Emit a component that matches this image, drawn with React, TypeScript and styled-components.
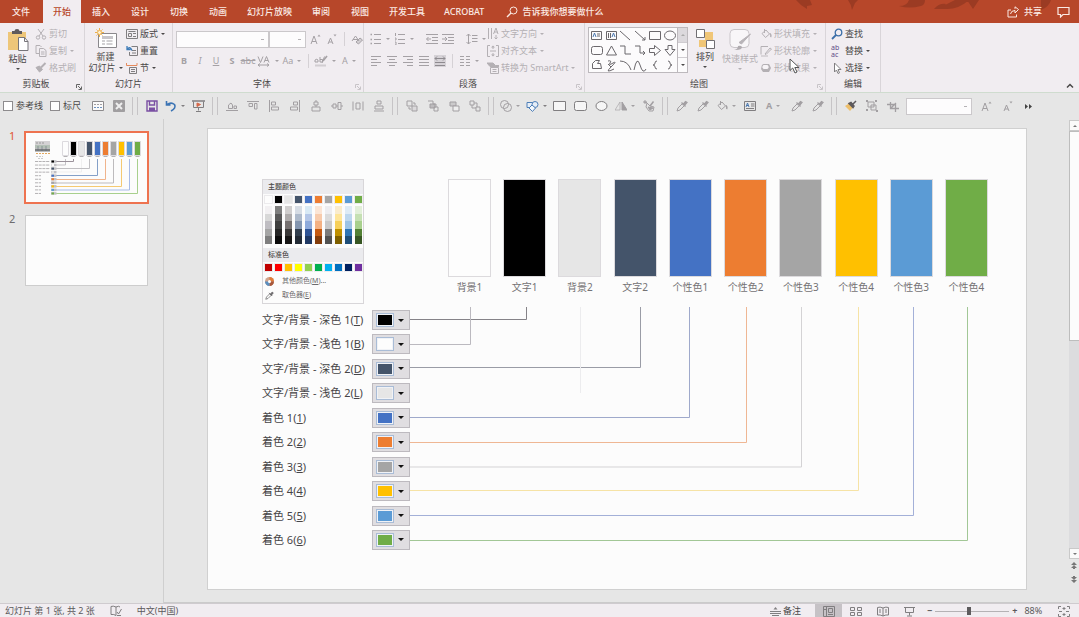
import React from "react";
import styled, { createGlobalStyle, css } from "styled-components";

const INK = "#4a4848";
const SOFT = "#807e80";
const MUTED = "#b4b0b4";
const BRAND = "#b7472a";
const RIBBON = "#f1edf1";
const CANVAS = "#e6e6e6";

const GlobalStyle = createGlobalStyle`
  * { box-sizing: border-box; }
  html, body, #root { height: 100%; }
  body {
    margin: 0;
    background: ${CANVAS};
    color: ${INK};
    font-family: "Noto Sans", "Noto Sans CJK SC", sans-serif;
    font-size: 9px;
    line-height: 12px;
  }
  button, input, select { font: inherit; color: inherit; }
  button { padding: 0; border: 0; background: none; white-space: nowrap; }
`;

/* ---------- icons ---------- */

type Art = { w: number; h: number; body: React.ReactNode };

const alignFrame = (body: React.ReactNode): Art => ({ w: 12, h: 12, body });

const dropper: Art = {
  w: 12, h: 12,
  body: (
    <>
      <path d="M1 11l1-3 4.5-4.5 2 2L4 10z" />
      <path d="M5.500 2.500l4 4M7 4.500l2.500-3 1.500 1L8.500 5.500z" fill="currentColor" strokeWidth="1.300" />
    </>
  ),
};

const bucket: Art = {
  w: 12, h: 12,
  body: (
    <>
      <path d="M2 5.500L6 2l3.500 4L5.500 9.500z" />
      <path d="M4.500 1v4" />
      <path d="M10 5.500q1.500 2 .5 3.500" strokeWidth="1.500" />
    </>
  ),
};

const growFont: Art = {
  w: 12, h: 12,
  body: <><path d="M1 11l3-8 3 8M2 8.500h4" /><path d="M7.500 3.500L9 1.500l1.500 2z" fill="currentColor" stroke="none" /></>,
};

const shrinkFont: Art = {
  w: 12, h: 12,
  body: <><path d="M2 11l2.500-6L7 11M3 9h3" /><path d="M7.500 1.500h3L9 3.500z" fill="currentColor" stroke="none" /></>,
};

const art: Record<string, Art> = {
  search: { w: 12, h: 12, body: <><circle cx="7.500" cy="4.500" r="3.500" /><path d="M5 7L1 11" strokeWidth="1.300" /></> },
  share: { w: 12, h: 12, body: <><path d="M4 4H1v7h8.500V8.500" /><path d="M3.500 8Q4 4.500 8 4.500V7l3.500-3.500L8 .8v2" /></> },
  comment: { w: 13, h: 12, body: <path d="M1 1.500h11v7H6L3.500 11V8.500H1z" strokeWidth="1.200" /> },
  paste: {
    w: 22, h: 24,
    body: (
      <>
        <path d="M1 4h18v18H1z" fill="#eec679" stroke="none" />
        <path d="M5 3h2.500a2.500 2 0 0 1 5 0H15v3H5z" fill="#5e5a5c" stroke="none" />
        <path d="M11.500 9.500h6l3.500 4v9h-9.500z" fill="#fff" stroke="#77757a" />
        <path d="M17.500 9.500v4H21" stroke="#77757a" />
      </>
    ),
  },
  cut: { w: 12, h: 12, body: <><path d="M3 1l5 7M9 1L4 8" /><circle cx="3" cy="9.500" r="1.700" /><circle cx="9" cy="9.500" r="1.700" /></> },
  copy: { w: 12, h: 12, body: <><path d="M4 8.500H1v-8h4l1.500 1.500" /><path d="M4.500 3.500h4l2.500 2v6H4.500zM6 7h3.500M6 9h3.500" /></> },
  painter: { w: 12, h: 12, body: <><path d="M1 5.500l3.500 4.500 3-2.500L4.500 4z" fill="currentColor" /><path d="M6 5.500L10.500 1" strokeWidth="2" /></> },
  newSlide: {
    w: 22, h: 22,
    body: (
      <>
        <path d="M3.500 5.500h18v14h-18z" fill="#fff" stroke="#8a888c" />
        <path d="M7 13h3M11.500 13h6M7 16h3M11.500 16h6" stroke="#a3a1a5" />
        <path d="M7 8h11v3H7z" fill="#c7c5c9" stroke="none" />
        <circle cx="4.500" cy="4.500" r="2" fill="#fff1cf" stroke="#edb04a" />
        <path d="M4.500 0v2M4.500 7v2M0 4.500h2M7 4.500h2M1.500 1.500l1.200 1.200M7.500 1.500L6.300 2.700M1.500 7.500l1.200-1.200M7.500 7.500L6.300 6.300" stroke="#edb04a" />
      </>
    ),
  },
  layout: { w: 12, h: 12, body: <><path d="M.5 1.500h11v9H.5zM2.500 3.500h7" /><path d="M2.500 5.500h3v3h-3zM7 5.500h3M7 8.500h3" /></> },
  reset: { w: 12, h: 12, body: <><path d="M5.500 1.500h6v9h-8V7M6 5.500h4M6 8h4" /><path d="M1 4.500q3-4 5 1M1 1v3.500h3.500" stroke="#3f7cb8" strokeWidth="1.300" /></> },
  section: { w: 12, h: 12, body: <><path d="M.5 1v2.500H11V1" stroke="#e58a5c" /><path d="M3.500 5.500h7v6h-7zM5 7.500h4M5 9.500h4" /></> },
  growFont,
  shrinkFont,
  clearFormat: { w: 12, h: 12, body: <><path d="M1 8l3.500-5L8 8M2 6.500h5" /><path d="M5 9l4-4 2.500 2-4 4z" fill="currentColor" fillOpacity=".4" /></> },
  spacing: { w: 14, h: 12, body: <><path d="M1 1.500l2.500 6 2.500-6M7 7.500L9.500 1.500l2.500 6M8 5.500h3M1 10h11M3 8.500L1 10l2 1.500M10 8.500l2 1.500-2 1.500" /></> },
  highlight: { w: 14, h: 12, body: <><path d="M1 7V5q2-1.500 3 0v2H2zM6 2v5h2.500V4.500H6M10.500 1.500L8 8" /><path d="M9 6l4-5" strokeWidth="1.600" /><path d="M1 10.500h11" strokeOpacity=".4" strokeWidth="2" /></> },
  bullets: { w: 12, h: 12, body: <><path d="M4 1.500h7M4 6.500h7M4 10.500h7" /><path d="M.5 1.500h1.500M.5 6.500h1.500M.5 10.500h1.500" strokeWidth="1.500" /></> },
  numbers: { w: 12, h: 12, body: <><path d="M4 1.500h7M4 6.500h7M4 10.500h7" /><path d="M1.500 0v3M1 5h1v2H1M1 9h1v3H1" /></> },
  outdent: { w: 12, h: 12, body: <path d="M0 1.500h12M6 4.500h6M6 7.500h6M0 10.500h12M5 6H.8M2.500 4L.5 6l2 2" /> },
  indent: { w: 12, h: 12, body: <path d="M0 1.500h12M6 4.500h6M6 7.500h6M0 10.500h12M0 6h4.500M3 4l2 2-2 2" /> },
  lineSpacing: { w: 12, h: 12, body: <path d="M2.500 1v10M.5 3l2-2 2 2M.5 9l2 2 2-2M6 2.500h5.500M6 5.500h5.500M6 8.500h5.500" /> },
  left: { w: 12, h: 12, body: <path d="M1 1.500h10M1 4.500h6M1 7.500h10M1 10.500h6" /> },
  center: { w: 12, h: 12, body: <path d="M1 1.500h10M3 4.500h6M1 7.500h10M3 10.500h6" /> },
  right: { w: 12, h: 12, body: <path d="M1 1.500h10M5 4.500h6M1 7.500h10M5 10.500h6" /> },
  justify: { w: 12, h: 12, body: <path d="M1 1.500h10M1 4.500h10M1 7.500h10M1 10.500h10" /> },
  distribute: { w: 12, h: 12, body: <><path d="M0 0h12v12H0z" fill="#d6d2d7" stroke="none" /><path d="M1 7.500h10M1 10.500h10M1 3.500h10M3 1.500l-2 2 2 2M9 1.500l2 2-2 2" stroke="#8e8a8f" /></> },
  columns: { w: 12, h: 12, body: <path d="M1 1.500h4M1 4.500h4M1 7.500h4M1 10.500h4M7 1.500h4M7 4.500h4M7 7.500h4M7 10.500h4" /> },
  textDir: { w: 12, h: 12, body: <path d="M1.500 0v11M4.500 0v11M6.500 6L9 0l2 6M7 4h3.500M9 7v4M7.500 9.500L9 11l1.500-1.500" /> },
  alignText: { w: 12, h: 12, body: <><path d="M3 .5H.5v11H3M9 .5h2.500v11H9M3 6h6M6 1v3M6 8v3" /><path d="M4 2.500L6 .5l2 2zM4 9.500l2 2 2-2z" fill="currentColor" stroke="none" /></> },
  smartArt: { w: 12, h: 12, body: <><path d="M0 1h6l2.500 2.500H12v1H3z" fill="currentColor" /><path d="M3.500 5.500h8v6h-8zM5.500 7.500h4M5.500 9.500h4" /></> },
  arrange: {
    w: 20, h: 22,
    body: (
      <>
        <path d="M10 4h8v8h-8zM4 12h7v7H4z" fill="#f0c677" stroke="none" />
        <path d="M1.500 1.500h8v8h-8zM11.500 12.500h8v8h-8z" fill="#fff" stroke="#716f73" />
      </>
    ),
  },
  quickStyle: {
    w: 24, h: 24,
    body: (
      <>
        <rect x="2" y="1.500" width="19" height="18" rx="4" fill="#f8f6f8" stroke="#c9c5c9" />
        <path d="M22.500 6l-9 10-2.500-1.500z" fill="#b8b4b8" stroke="#b8b4b8" />
        <path d="M6 22q4-.5 4-4 3-1 4 1 0 3.500-8 3z" fill="#b0acb0" stroke="none" />
      </>
    ),
  },
  bucket,
  outline: { w: 12, h: 12, body: <><path d="M8 1.500H1v8M5 9L10 3l1.500 1L6 9.500z" /><path d="M1 11h7" strokeOpacity=".4" strokeWidth="2" /></> },
  effect: { w: 12, h: 12, body: <><path d="M3 2h6l2 4-2 4H3L1 7z" fill="currentColor" stroke="none" /><rect x="2" y="2.500" width="7" height="5" rx="2" fill="#f7f4f7" /></> },
  find: { w: 12, h: 12, body: <><circle cx="7.500" cy="4.500" r="3.300" stroke="#3c6fa8" strokeWidth="1.300" /><path d="M5 7L1 11" stroke="#3c6fa8" strokeWidth="1.800" /></> },
  select: { w: 12, h: 12, body: <path d="M3.500 1v9l2-2 1.500 3.500 1.500-.7L7 7.500h3z" fill="#fff" /> },
  textBox: { w: 12, h: 12, body: <><path d="M.5 1.500h11v9H.5zM7 4h3.500M7 6h3.500M2 8.500h8" /><path d="M2 7l1.500-4L5 7M2.500 5.500h2" stroke="#4a78b0" /></> },
  ruler: { w: 12, h: 12, body: <><path d="M.5 1.500h11v9H.5z" fill="#fafafa" stroke="#8d8b8d" /><path d="M2 4.500h2M5 4.500h2M8 4.500h2" /><path d="M2 7.500h2M5 7.500h2M8 7.500h2" stroke="#6f93bf" /></> },
  closeBox: { w: 12, h: 12, body: <><path d="M.5.5h11v11H.5z" fill="#a09ea0" stroke="#a09ea0" /><path d="M3 3l6 6M9 3L3 9" stroke="#eee" strokeWidth="2" /></> },
  save: { w: 12, h: 12, body: <><path d="M1 1h10v10H1zM3.500 1v4h5V1" stroke="#7a4fa3" strokeWidth="1.400" /><path d="M3 7.500h6V11H3z" fill="#7a4fa3" stroke="none" /></> },
  undo: { w: 12, h: 12, body: <path d="M1.500 1v4h4M1.800 4.800Q6 1.500 9.500 4.500q2 3.500-3.500 6.500" stroke="#3c74b4" strokeWidth="1.600" /> },
  present: { w: 13, h: 12, body: <><path d="M0 1h13" strokeWidth="1.500" /><path d="M1.500 1.500v6h10v-6M6.500 7.500v3M4 11.500h5" /><path d="M5 3l3.500 1.500L5 6.500z" fill="#d5694b" stroke="#d5694b" /></> },
  alBottom: alignFrame(<path d="M0 10.500h12M2.500 8.500V5L5 3l1.500 2v3.500zM8 8.500V6h2.500v2.500z" />),
  alTop: alignFrame(<path d="M0 1.500h12M2 3.500h3.500v3H2zM7.500 3.500H10V9H7.500z" />),
  alLeft: alignFrame(<path d="M1.500 0v12M3.500 2h4v3h-4zM3.500 7h7v3h-7z" />),
  alRight: alignFrame(<path d="M10.500 0v12M8.500 2h-4v3h4zM8.500 7h-7v3h7z" />),
  alCenter: alignFrame(<path d="M6 0v2M4 2h4v3H4zM2 7h8v4H2zM6 5v2" />),
  alMiddle: alignFrame(<path d="M0 6h2M2 4h3v4H2zM7 2.500h3v7H7zM10 6h2M5 6h2" />),
  distH: alignFrame(<path d="M1 1.500v9M11 1.500v9M4 3h4v6H4z" />),
  distV: alignFrame(<path d="M1 11h10M4 1h4v3H4zM2 6h8v3H2z" />),
  front1: alignFrame(<><path d="M1 1h5v5H1zM3 7v2h2M7 3h2v2" /><path d="M6 6h5v5H6z" fill="#dcdadc" /></>),
  front2: alignFrame(<><path d="M1 1h5v3h3v3" /><path d="M3 4h5v4H3z" fill="currentColor" fillOpacity=".6" /><path d="M7 7h4v4H7z" /></>),
  back1: alignFrame(<><path d="M2 2h6v4H2z" fill="currentColor" fillOpacity=".4" /><path d="M5 6h6v5H5z" fill="#eee" /></>),
  back2: alignFrame(<path d="M1 1h4v4H1zM7 7h4v4H7zM5 3h3v4M3 5v3h4" />),
  merge: alignFrame(<><circle cx="4.500" cy="4.500" r="4" /><circle cx="7.500" cy="7.500" r="4" /></>),
  shapes: { w: 13, h: 12, body: <g stroke="#4e7fb8"><path d="M1 2.500h6v5H1z" fill="#e6eef7" /><circle cx="9" cy="4.500" r="3" fill="#e6eef7" /><path d="M3 8l3-3 3.500 3-3 3.500z" fill="#f4f8fc" /></g> },
  rect: { w: 13, h: 12, body: <path d="M.5 1.500h12v9H.5z" fill="#f6f6f6" /> },
  rrect: { w: 13, h: 12, body: <rect x=".5" y="1.500" width="12" height="9" rx="2" fill="#f6f6f6" /> },
  ellipse: { w: 13, h: 12, body: <ellipse cx="6.500" cy="6" rx="5.500" ry="4.500" fill="#f6f6f6" /> },
  flip: alignFrame(<><path d="M5 2v8H0z" strokeOpacity=".6" /><path d="M7 2v8h5z" fill="currentColor" /></>),
  editShape: alignFrame(<><path d="M1 2l3 .5M4 3l-1 4 3 4h4l1-4-4-1zM1 1h2v2H1z" /><path d="M5 7l2 3 3-2z" fill="currentColor" /><path d="M7 6l3.500-4.500" strokeWidth="1.500" /></>),
  dropper,
  brush: { w: 13, h: 12, body: <><path d="M1 6l5 5 3-3.500L5 3.500z" fill="#edbf6c" stroke="none" /><path d="M5 3.500L9 7.500l1-1.500-3-3.500zM8.500 4.500L12 1" fill="#5c595c" stroke="#5c595c" strokeWidth="1.500" /></> },
  group: alignFrame(<><path d="M2 2h6v5H2zM5 5h5v5H5z" /><path d="M0 0h2v2H0zM9 0h2v2H9zM0 9h2v2H0zM10 10h2v2h-2z" fill="currentColor" stroke="none" /></>),
  crop: alignFrame(<path d="M3.500 2v6.500H12M0 4.500h8.500V12M4 8l5-5" strokeWidth="1.300" />),
  spell: { w: 12, h: 12, body: <path d="M6 2v8.500M6 2Q3 .5 1 1.500v8q3-.5 5 1M6 2q3-1.500 4 0M7 7l1.500 2L11.500 4M7 10.500h4" /> },
  notes: { w: 11, h: 12, body: <><path d="M0 6.500h11M0 8.500h11M2 10.500h7" /><path d="M3.500 4.500l2-2.500 2 2.500z" fill="currentColor" stroke="none" /></> },
  normal: { w: 12, h: 11, body: <path d="M.5.5h11v10H.5zM3.500.5v10M5.500 2.500h4v4h-4zM5 8.500h5M.5 3.500h3" /> },
  sorter: { w: 12, h: 11, body: <path d="M.5 1.500h4v3h-4zM7.500 1.500h4v3h-4zM.5 6.500h4v3h-4zM7.500 6.500h4v3h-4z" /> },
  reading: { w: 12, h: 11, body: <path d="M6 2Q3 .5.5 1.500v7.500Q3 8.500 6 10q3-1.500 5.500-1V1.500Q9 .5 6 2zM6 2v8M2 4h2M2 6h2M8 4h2M8 6h2" /> },
  show: { w: 12, h: 11, body: <path d="M0 1.500h11M1.500 1.500v5h8v-5M5.500 6.500v3M3 10h5" /> },
  fit: { w: 12, h: 11, body: <path d="M.5 3V.5H3M9 .5h2.500V3M11.500 8v2.500H9M3 10.500H.5V8M6 1v3M6 7v3M1 5.500h3M8 5.500h3M4.500 2.500h3M4.500 8.500h3" /> },
};

const Svg = styled.svg<{ $tone?: string }>`
  display: block;
  flex: none;
  fill: none;
  stroke: currentColor;
  color: ${(p) => p.$tone || "inherit"};
`;

const Icon = ({ name, tone }: { name: string; tone?: string }) => {
  const a = art[name];
  return (
    <Svg $tone={tone} width={a.w} height={a.h} viewBox={`0 0 ${a.w} ${a.h}`} aria-hidden>
      {a.body}
    </Svg>
  );
};

const Caret = styled.i`
  flex: none;
  width: 4px;
  border: 2px solid transparent;
  border-top-color: currentColor;
  border-bottom-width: 0;
`;

/* ---------- shell ---------- */

const Window = styled.div`
  min-height: 100%;
  display: flex;
  flex-direction: column;
`;

const TabBar = styled.header`
  position: relative;
  height: 23px;
  display: flex;
  background: ${BRAND};
  color: #fbeae4;
  font-weight: 500;
`;

const Leaves = styled.svg`
  position: absolute;
  top: 0;
  right: 0;
  fill: #9b3b23;
`;

const Tab = styled.button<{ $active?: boolean }>`
  min-width: 38px;
  margin-right: 1px;
  padding: 0 9px;
  ${(p) => p.$active && css`background: ${RIBBON}; color: ${BRAND};`}
  &:first-of-type { min-width: 42px; }
`;

const TellMe = styled.label`
  display: flex;
  align-items: center;
  gap: 4px;
  margin-left: 12px;
  flex: 1;
  input {
    width: 100px;
    padding: 0;
    border: 0;
    background: none;
    &::placeholder { color: #fbeae4; opacity: 1; }
  }
`;

const TabActions = styled.div`
  position: relative;
  display: flex;
  gap: 15px;
  padding-right: 9px;
  button { display: flex; align-items: center; gap: 5px; }
`;

const Ribbon = styled.section`
  height: 70px;
  display: flex;
  background: ${RIBBON};
  border-bottom: 1px solid #cfdccf;
`;

const Group = styled.section<{ $w: number }>`
  width: ${(p) => p.$w}px;
  flex: none;
  display: flex;
  flex-direction: column;
  padding-top: 2px;
  border-right: 1px solid #d9d5d9;
`;

const GroupBody = styled.div`
  height: 53px;
  display: flex;
`;

const GroupFoot = styled.footer<{ $off?: boolean; $plain?: boolean }>`
  position: relative;
  text-align: center;
  padding-right: ${(p) => (p.$plain ? 0 : 12)}px;
  svg {
    position: absolute;
    right: 2px;
    bottom: 0;
    color: ${(p) => (p.$off ? "#c8c4c8" : "#666")};
  }
`;

const Foot = ({ label, off, plain }: { label: string; off?: boolean; plain?: boolean }) => (
  <GroupFoot $off={off} $plain={plain}>
    {label}
    {!plain && (
      <Svg width="6" height="6" viewBox="0 0 6 6" aria-hidden>
        <path d="M.5 4V.5H4M2 2l3 3M5.500 2.500v3h-3" />
      </Svg>
    )}
  </GroupFoot>
);

const BigButton = styled.button<{ $w: number; $off?: boolean }>`
  width: ${(p) => p.$w}px;
  flex: none;
  display: flex;
  flex-direction: column;
  align-items: center;
  color: ${(p) => (p.$off ? MUTED : INK)};
  line-height: 11px;
  > svg { margin: 3px 0 1px; }
  > i { margin-top: 4px; }
  span { display: flex; align-items: center; gap: 3px; }
`;

const Stack = styled.div<{ $pad?: number }>`
  display: flex;
  flex-direction: column;
  align-items: flex-start;
  padding-left: ${(p) => p.$pad || 0}px;
`;

const SmallButton = styled.button<{ $off?: boolean }>`
  height: 17px;
  display: flex;
  align-items: center;
  gap: 2px;
  color: ${(p) => (p.$off ? MUTED : INK)};
  > i { margin-left: 1px; }
`;

const FontPane = styled.div`
  flex: 1;
  padding: 3px 3px 0;
`;

const ToolRow = styled.div`
  height: 22px;
  display: flex;
  align-items: center;
  color: #a5a1a5;
`;

const Tool = styled.button<{ $menu?: boolean }>`
  width: ${(p) => (p.$menu ? 24 : 16)}px;
  height: 16px;
  flex: none;
  display: flex;
  align-items: center;
  justify-content: center;
  gap: 4px;
`;

const Bar = styled.i`
  width: 1px;
  height: 14px;
  margin: 0 4px;
  background: #d5d1d5;
`;

const FontCombos = styled.div`
  display: flex;
  margin-right: 2px;
`;

const Combo = styled.select<{ $w: number }>`
  width: ${(p) => p.$w}px;
  height: 17px;
  flex: none;
  appearance: none;
  border: 1px solid #cbc8cb;
  border-radius: 0;
  background: #fdfcfd linear-gradient(#b5b2b5, #b5b2b5) no-repeat right 4px center / 3px 1px;
`;

const Gallery = styled.div`
  display: flex;
  margin: 2px 2px 0 3px;
  height: 46px;
  border: 1px solid #bdb9bd;
  background: #fcfbfc;
`;

const ShapeGrid = styled.svg`
  fill: none;
  stroke: #6b686c;
`;

const GalleryScroll = styled.div`
  width: 10px;
  display: flex;
  flex-direction: column;
  border-left: 1px solid #bdb9bd;
  button {
    flex: 1;
    display: flex;
    align-items: center;
    justify-content: center;
    border-bottom: 1px solid #cfccd0;
  }
  button:first-child { background: #dcd9dd; color: #aaa; }
  button:last-child { border-bottom: 0; }
`;

const Collapse = styled.button`
  margin-left: auto;
  padding-right: 5px;
  align-self: flex-end;
  height: 12px;
`;

const Swap = styled.span`
  width: 12px;
  flex: none;
  font-size: 7px;
  line-height: 7px;
  text-align: left;
  white-space: pre-line;
  color: #5c4a86;
`;

const Pointer = styled.svg`
  position: absolute;
  left: 789px;
  top: 58px;
`;

/* ---------- quick access ---------- */

const QuickBar = styled.nav`
  height: 26px;
  flex: none;
  display: flex;
  align-items: center;
  padding-left: 3px;
  color: #a29fa2;
  overflow: hidden;
`;

const Check = styled.label<{ $w: number }>`
  width: ${(p) => p.$w}px;
  flex: none;
  display: flex;
  align-items: center;
  gap: 3px;
  color: ${INK};
  input {
    appearance: none;
    width: 10px;
    height: 10px;
    margin: 0;
    border: 1px solid #8d8b8d;
    background: #fff;
  }
`;

const Cell = styled.button<{ $menu?: boolean; $dark?: boolean }>`
  width: ${(p) => (p.$menu ? 26 : 21)}px;
  height: 20px;
  flex: none;
  display: flex;
  align-items: center;
  justify-content: center;
  gap: 4px;
  color: ${(p) => (p.$dark ? SOFT : "inherit")};
`;

const Divide = styled.i`
  width: 6px;
  height: 18px;
  flex: none;
  margin: 0 3px;
  border: solid #c6c4c6;
  border-width: 0 1px;
`;

const QuickCombo = styled(Combo)`
  margin: 0 4px 0 3px;
`;

/* ---------- work area ---------- */

const Work = styled.div`
  flex: 1;
  display: flex;
`;

const Thumbs = styled.aside`
  width: 164px;
  flex: none;
  padding: 12px 0 0 9px;
  border-right: 1px solid #cfcfcf;
  display: flex;
  flex-direction: column;
  gap: 10px;
`;

const ThumbItem = styled.div<{ $active?: boolean }>`
  display: flex;
  gap: 9px;
  span {
    width: 6px;
    font-size: 11px;
    line-height: 10px;
    color: ${(p) => (p.$active ? "#e0562f" : "#6e6c6e")};
  }
`;

const ThumbPage = styled.button<{ $active?: boolean }>`
  width: 125px;
  height: 73px;
  background: #fcfcfc;
  border: ${(p) => (p.$active ? "2px solid #ee7350" : "1px solid #cdcdcd")};
  ${(p) => !p.$active && css`margin: 1px; width: 123px; height: 71px;`}
  svg { display: block; }
`;

const Stage = styled.main`
  flex: 1;
  padding: 9px 42px 12px 43px;
  display: flex;
  border-bottom: 1px solid #cbcbcb;
`;

const Slide = styled.article`
  flex: 1;
  padding: 50px 0 39px 54px;
  border: 1px solid #d0d0d0;
  background: #fcfcfc;
`;

const Diagram = styled.div`
  position: relative;
  width: 726px;
  display: flex;
  justify-content: space-between;
`;

const Wires = styled.svg`
  position: absolute;
  left: 0;
  top: 0;
  fill: none;
  pointer-events: none;
`;

const Legend = styled.div`
  width: 148px;
`;

const Palette = styled.section`
  width: 102px;
  height: 125px;
  margin-bottom: 6px;
  border: 1px solid #d8d6d9;
  font-size: 7px;
  h3 {
    margin: 0;
    height: 14px;
    padding-left: 5px;
    font-size: 7px;
    font-weight: 500;
    line-height: 14px;
    background: #ebebee;
  }
`;

const Chips = styled.div`
  display: grid;
  grid-template-columns: repeat(10, 7px);
  gap: 3px;
  padding: 2px 2px 3px;
  i { height: 7px; }
`;

const Chip = styled.i<{ $c: string }>`
  background: ${(p) => p.$c};
  outline: 1px solid #ecebed;
`;

const Ramp = styled.i<{ $c: string[] }>`
  && { height: 38px; }
  background: linear-gradient(${(p) =>
    p.$c.map((c, i) => `${c} ${i * 20}% ${(i + 1) * 20}%`).join(",")});
`;

const Ramps = styled(Chips)`
  padding: 0 2px 4px;
`;

const PaletteAction = styled.button`
  height: 14px;
  display: flex;
  align-items: center;
  gap: 8px;
  padding-left: 2px;
  color: #6b696b;
  font-size: 7px;
`;

const Pickers = styled.div`
  height: 240px;
  display: flex;
  flex-direction: column;
  justify-content: space-between;
  color: #474547;
  font-size: 11px;
`;

const Picker = styled.label`
  height: 20px;
  display: flex;
  align-items: center;
  justify-content: space-between;
  white-space: nowrap;
`;

const PickerButton = styled.button`
  width: 38px;
  height: 20px;
  display: flex;
  align-items: center;
  justify-content: space-between;
  padding: 0 5px 0 3px;
  border: 1px solid #bdbabf;
  background: #e0dee1;
  color: #111;
  i:last-child { width: 6px; border-width: 3px 3px 0; }
`;

const Well = styled.i<{ $c: string }>`
  width: 18px;
  height: 14px;
  border: 1px solid #a9bcd6;
  padding: 1px;
  background: ${(p) => p.$c} content-box;
  box-shadow: inset 0 0 0 1px #f0f2f6;
`;

const Columns = styled.div`
  width: 540px;
  display: flex;
  justify-content: space-between;
`;

const Column = styled.figure`
  margin: 0;
  width: 43px;
  color: #747274;
  font-size: 10px;
  line-height: 14px;
  text-align: center;
  white-space: nowrap;
`;

const Block = styled.div<{ $c: string }>`
  height: 98px;
  margin-bottom: 3px;
  border: 1px solid #dcdadd;
  background: ${(p) => p.$c};
`;

const Scroll = styled.div`
  width: 10px;
  flex: none;
  margin: 1px 0 18px;
  display: flex;
  flex-direction: column;
  color: #777;
  button {
    height: 11px;
    flex: none;
    display: flex;
    align-items: center;
    justify-content: center;
    border: 1px solid #c9c9c9;
    border-right: 0;
    background: #fafafa;
  }
`;

const ScrollThumb = styled.div`
  flex: 1;
  border: 1px solid #bdbdbd;
  border-right: 0;
  background: #fcfcfc;
`;

const ScrollTrack = styled.div`
  flex: 1;
  background: #dcdcde;
`;

const PageJump = styled.div`
  height: 26px;
  button { height: 13px; width: 10px; border: 0; background: none; }
`;

const UpCaret = styled(Caret)`
  transform: rotate(180deg);
`;

/* ---------- status ---------- */

const Status = styled.footer`
  height: 15px;
  flex: none;
  display: flex;
  align-items: center;
  padding-left: 5px;
  border-top: 1px solid #cfcbcf;
  background: ${RIBBON};
  color: #5b595b;
  white-space: nowrap;
`;

const StatusText = styled.span`
  display: flex;
  gap: 15px;
  flex: 1;
`;

const View = styled.button<{ $active?: boolean }>`
  width: 27px;
  height: 14px;
  flex: none;
  display: flex;
  align-items: center;
  justify-content: center;
  color: ${SOFT};
  background: ${(p) => (p.$active ? "#c6c2c6" : "none")};
`;

const NotesButton = styled.button`
  display: flex;
  align-items: center;
  gap: 2px;
  margin-right: 14px;
  color: ${INK};
`;

const Zoom = styled.div`
  width: 156px;
  display: flex;
  align-items: center;
  gap: 3px;
  padding-left: 4px;
  input {
    appearance: none;
    width: 74px;
    height: 12px;
    margin: 0;
    background: linear-gradient(#b5b2b5, #b5b2b5) no-repeat center / 100% 1px;
  }
  input::-webkit-slider-thumb {
    appearance: none;
    width: 4px;
    height: 8px;
    background: #5d5b5d;
  }
  output { margin: 0 13px 0 4px; }
`;

/* ---------- data ---------- */

const themeColors = ["#fdfdfd", "#000000", "#e6e6e6", "#44546a", "#4472c4", "#ed7d31", "#a5a5a5", "#ffc000", "#5b9bd5", "#70ad47"];
const standardColors = ["#c00000", "#ff0000", "#ffc000", "#ffff00", "#92d050", "#00b050", "#00b0f0", "#0070c0", "#002060", "#7030a0"];
const ramps = [
  ["#f2f0f2", "#d8d8d8", "#bfbdc2", "#a5a5a5", "#7f7f7f"],
  ["#7f7f7f", "#595959", "#3f3f3f", "#262626", "#0c0c0c"],
  ["#d0cece", "#aeabab", "#757070", "#3a3838", "#171616"],
  ["#d6dce4", "#adb9ca", "#8496b0", "#323f4f", "#222a35"],
  ["#d8e9f5", "#b4c6e7", "#8eaadb", "#2f5496", "#1f3864"],
  ["#fbe5d5", "#f7cbac", "#f4b183", "#c55a11", "#833c0b"],
  ["#ededf0", "#dbdbdb", "#c9c9c9", "#7b7b7b", "#525252"],
  ["#faeccd", "#fee599", "#f7d05a", "#bf9000", "#7f6000"],
  ["#deebf6", "#bdd7ee", "#9cc3e5", "#2e75b5", "#1e4e79"],
  ["#e2efd9", "#c5e0b3", "#a8d08d", "#538135", "#375623"],
];
const columnNames = ["背景1", "文字1", "背景2", "文字2", "个性色1", "个性色2", "个性色3", "个性色4", "个性色3", "个性色4"];
const pickers: [string, string, string][] = [
  ["文字/背景 - 深色 1", "T", "#000000"],
  ["文字/背景 - 浅色 1", "B", "#fdfdfd"],
  ["文字/背景 - 深色 2", "D", "#44546a"],
  ["文字/背景 - 浅色 2", "L", "#e6e6e6"],
  ["着色 1", "1", "#4472c4"],
  ["着色 2", "2", "#ed7d31"],
  ["着色 3", "3", "#a5a5a5"],
  ["着色 4", "4", "#ffc000"],
  ["着色 5", "5", "#5b9bd5"],
  ["着色 6", "6", "#70ad47"],
];
const wires: [string, string][] = [
  ["M264.500 128v12.500H148", "#858388"],
  ["M208.500 128v37.500H148", "#bbb9bf"],
  ["M378.500 128v60.500H148", "#9a9ca6"],
  ["M318.500 128v86", "#ececee"],
  ["M427.500 128v110.500H148", "#9fa9cb"],
  ["M484.500 128v135.500H148", "#efb794"],
  ["M539.500 128v160H148", "#d4d3d5"],
  ["M596.500 128v183.500H148", "#f6e3a6"],
  ["M651.500 128v208.500H148", "#a3b0d8"],
  ["M705.500 128v233.500H148", "#a2c796"],
];
const tabs = ["文件", "开始", "插入", "设计", "切换", "动画", "幻灯片放映", "审阅", "视图", "开发工具", "ACROBAT"];

const miniX = [39.5, 47.5, 55.5, 63.5, 71.5, 79.5, 87.5, 95.5, 103.5, 111.5];
const miniY = [32, 28.5, 39, 36, 42.5, 46.5, 50, 53.5, 57, 60.5];
const miniInk = ["#c4c2c6", "#9b929b", "#c0bfc2", "#efefef", "#84a0c8", "#f0b48c", "#bdbbbd", "#f5ca72", "#a8bce8", "#a8d08d"];
const miniEnd = [32, 28.5, 39, 35.5, 42.5, 46.5, 50, 53.5, 57, 60.5];

const MiniSlide = () => (
  <svg width="121" height="69" viewBox="0 0 121 69" fill="none" aria-hidden>
    <path d="M9 8h15v4H9z" fill="#d4d2d4" />
    <path d="M10 10h9" stroke="#999" strokeDasharray="2 1" />
    <path d="M9 13.500h15" stroke="#b4c0b6" strokeWidth="3" />
    <path d="M9 17h15" stroke="#7d7f80" strokeWidth="3" />
    <path d="M12 13v5M16 13v5M20 13v5" stroke="#5a6675" strokeOpacity=".5" />
    <path d="M10 20.500h14" stroke="#e2a860" strokeDasharray="2 1" />
    <path d="M10 23.500h7M12 25.500h5" stroke="#ccc" strokeDasharray="2 1" />
    {miniX.map((x, i) => (
      <g key={x}>
        <path d={`M${x} 26V${i === 2 ? 39 : i === 3 ? 35.5 : miniEnd[i]}H30`} stroke={miniInk[i === 2 ? 3 : i === 3 ? 2 : i]} />
        <path d={`M${x - 3} 8.500h6v14h-6z`} fill={themeColors[i]} stroke="#dcdade" />
        <path d={`M${x - 2} 23.500h4`} stroke="#b5b3b5" />
      </g>
    ))}
    {pickers.map(([name, , color], i) => (
      <g key={name}>
        <path d={`M9 ${28.5 + i * 3.55}h${i < 4 ? 15 : 6}`} stroke="#b4b2b4" strokeDasharray="3 .7" />
        <path d={`M25 ${28.5 + i * 3.55}h5.500`} stroke="#c2c0c4" strokeWidth="2.500" />
        <path d={`M25.500 ${28.5 + i * 3.55}h2.500`} stroke={color} strokeWidth="2" />
      </g>
    ))}
  </svg>
);

const cell = (name: string, opts: { menu?: boolean; dark?: boolean } = {}, key?: string) => (
  <Cell key={key || name} $menu={opts.menu} $dark={opts.dark} aria-label={name}>
    <Icon name={name} />
    {opts.menu && <Caret />}
  </Cell>
);

const tool = (name: string, menu?: boolean) => (
  <Tool $menu={menu} aria-label={name}>
    <Icon name={name} />
    {menu && <Caret />}
  </Tool>
);

const small = (icon: string, text: string, menu?: boolean, off?: boolean) => (
  <SmallButton $off={off}>
    <Icon name={icon} tone={off ? undefined : SOFT} />
    {text}
    {menu && <Caret />}
  </SmallButton>
);

const ParaTools = styled.div`
  width: 123px;
  flex: none;
  padding: 3px 0 0 4px;
`;

export default function App() {
  return (
    <Window>
      <GlobalStyle />
      <TabBar>
        <Leaves width="290" height="23" viewBox="0 0 290 23" aria-hidden>
          <path d="M7 0h14l2 5-5 1 0 3-6-4zM59 0h10l-3 3-3 7q-1-6-4-10zM110 6q8 0 10-6h16q0 5-4 6-12 3-22 0zM145 9q5-6 12-5l-1 1 10-5h14q-10 9-22 9zM178 0h12l-6 9zM252 0h10q-2 7-10 10z" />
        </Leaves>
        {tabs.map((t) => (
          <Tab key={t} $active={t === "开始"}>{t}</Tab>
        ))}
        <TellMe>
          <Icon name="search" />
          <input aria-label="告诉我你想要做什么" placeholder="告诉我你想要做什么" />
        </TellMe>
        <TabActions>
          <button><Icon name="share" />共享</button>
          <button aria-label="批注"><Icon name="comment" /></button>
        </TabActions>
      </TabBar>

      <Ribbon>
        <Group $w={85}>
          <GroupBody>
            <BigButton $w={35}><Icon name="paste" />粘贴<Caret /></BigButton>
            <Stack>
              {small("cut", "剪切", false, true)}
              {small("copy", "复制", true, true)}
              {small("painter", "格式刷", false, true)}
            </Stack>
          </GroupBody>
          <Foot label="剪贴板" />
        </Group>

        <Group $w={88}>
          <GroupBody>
            <BigButton $w={41}><Icon name="newSlide" />新建<span>幻灯片<Caret /></span></BigButton>
            <Stack>
              {small("layout", "版式", true)}
              {small("reset", "重置")}
              {small("section", "节", true)}
            </Stack>
          </GroupBody>
          <Foot label="幻灯片" plain />
        </Group>

        <Group $w={191}>
          <GroupBody>
            <FontPane>
              <ToolRow>
                <FontCombos>
                  <Combo $w={93} aria-label="字体" />
                  <Combo $w={37} aria-label="字号" />
                </FontCombos>
                {tool("growFont")}
                {tool("shrinkFont")}
                <Bar />
                {tool("clearFormat")}
              </ToolRow>
              <ToolRow>
                <Tool><b>B</b></Tool>
                <Tool><em>I</em></Tool>
                <Tool><u>U</u></Tool>
                <Tool><b>S</b></Tool>
                <Tool><s>abc</s></Tool>
                {tool("spacing", true)}
                <Tool $menu>Aa<Caret /></Tool>
                <Bar />
                {tool("highlight", true)}
                <Tool $menu>A<Caret /></Tool>
              </ToolRow>
            </FontPane>
          </GroupBody>
          <Foot label="字体" off />
        </Group>

        <Group $w={221}>
          <GroupBody>
            <ParaTools>
              <ToolRow>
                {tool("bullets", true)}
                {tool("numbers", true)}
                <Bar />
                {tool("outdent")}
                {tool("indent")}
                <Bar />
                {tool("lineSpacing", true)}
              </ToolRow>
              <ToolRow>
                {tool("left")}
                {tool("center")}
                {tool("right")}
                {tool("justify")}
                {tool("distribute")}
                <Bar />
                {tool("columns", true)}
              </ToolRow>
            </ParaTools>
            <Stack>
              {small("textDir", "文字方向", true, true)}
              {small("alignText", "对齐文本", true, true)}
              {small("smartArt", "转换为 SmartArt", true, true)}
            </Stack>
          </GroupBody>
          <Foot label="段落" off />
        </Group>

        <Group $w={241}>
          <GroupBody>
            <Gallery>
              <ShapeGrid width="88" height="44" viewBox="0 0 88 44" aria-hidden>
                <path d="M2.500 3.500h10v8h-10zM8 6h3M8 8h3M17.500 3.500h10v8h-10zM19.500 5v5M21.500 5v5" />
                <path d="M4 9l1.500-4L7 9M23 9l1.500-4L26 9" stroke="#4a78b0" />
                <path d="M31 3l10 9M46 3l10 9M56 9v3h-3M60.500 3.500h11v8h-11z" />
                <ellipse cx="81" cy="7.500" rx="5.500" ry="4.500" />
                <rect x="2.500" y="18.500" width="11" height="8" rx="2" />
                <path d="M22.500 18l5 9h-10zM31 18h5v8h6M46 18h5v7h5M54 23l2 2-2 2M60.500 20.500h5v-3l6 5-6 5v-3h-5zM79 17.500h4v4h3l-5 6-5-6h3z" />
                <path d="M3.500 40.500v-5l3-3h4l-2 3h3l1 5zM19 33q4-1 2 2t3 0-2 4 3 2M19 36l3 3M31 33q8 0 11 9M45 42q3-15 6-5t6 4M68 33q-2 0-2 2t-2 2q2 0 2 2t2 2M79 33q2 0 2 2t2 2q-2 0-2 2t-2 2" />
              </ShapeGrid>
              <GalleryScroll>
                <button aria-label="上一行"><UpCaret /></button>
                <button aria-label="下一行"><Caret /></button>
                <button aria-label="其他"><Caret /></button>
              </GalleryScroll>
            </Gallery>
            <BigButton $w={30}><Icon name="arrange" />排列<Caret /></BigButton>
            <BigButton $w={40} $off><Icon name="quickStyle" />快速样式<Caret /></BigButton>
            <Stack>
              {small("bucket", "形状填充", true, true)}
              {small("outline", "形状轮廓", true, true)}
              {small("effect", "形状效果", true, true)}
            </Stack>
          </GroupBody>
          <Foot label="绘图" off />
        </Group>

        <Group $w={55}>
          <GroupBody>
            <Stack $pad={5}>
              {small("find", "查找")}
              <SmallButton><Swap>{"ab\nac"}</Swap>替换<Caret /></SmallButton>
              {small("select", "选择", true)}
            </Stack>
          </GroupBody>
          <Foot label="编辑" plain />
        </Group>
        <Collapse aria-label="折叠功能区">
          <Svg width="8" height="6" viewBox="0 0 8 6"><path d="M1 4.500l3-3 3 3" strokeWidth="1.500" /></Svg>
        </Collapse>
      </Ribbon>

      <QuickBar>
        <Check $w={47}><input type="checkbox" />参考线</Check>
        <Check $w={37}><input type="checkbox" />标尺</Check>
        {cell("ruler")}
        {cell("closeBox")}
        <Divide />
        {cell("save")}
        {cell("undo", { menu: true, dark: true })}
        {cell("present", { dark: true })}
        <Divide />
        {["alBottom", "alTop", "alLeft", "alRight", "alCenter", "alMiddle", "distH", "distV"].map((n) => cell(n))}
        <Divide />
        {["front1", "front2", "back1", "back2"].map((n) => cell(n))}
        <Divide />
        {cell("merge", { menu: true })}
        {cell("shapes", { menu: true, dark: true })}
        {cell("rect", { dark: true })}
        {cell("rrect", { dark: true })}
        {cell("ellipse", { dark: true })}
        {cell("flip", { menu: true })}
        {cell("editShape")}
        <Divide />
        {cell("dropper", {}, "d1")}
        {cell("dropper", {}, "d2")}
        {cell("bucket", { menu: true })}
        {cell("textBox", { dark: true })}
        <Cell $menu><b>A</b><Caret /></Cell>
        {cell("dropper", {}, "d3")}
        {cell("dropper", {}, "d4")}
        <Divide />
        {cell("brush")}
        {cell("group")}
        {cell("crop")}
        <QuickCombo $w={66} aria-label="字号" />
        {cell("growFont")}
        {cell("shrinkFont")}
        <Cell $dark aria-label="更多命令">
          <Svg width="7" height="5" viewBox="0 0 7 5"><path d="M0 0l3 2.500L0 5zM4 0l3 2.500L4 5z" fill="#444" stroke="none" /></Svg>
        </Cell>
      </QuickBar>

      <Work>
        <Thumbs>
          <ThumbItem $active>
            <span>1</span>
            <ThumbPage $active aria-label="幻灯片 1"><MiniSlide /></ThumbPage>
          </ThumbItem>
          <ThumbItem>
            <span>2</span>
            <ThumbPage aria-label="幻灯片 2" />
          </ThumbItem>
        </Thumbs>

        <Stage>
          <Slide>
            <Diagram>
              <Legend>
                <Palette>
                  <h3>主题颜色</h3>
                  <Chips>{themeColors.map((c) => <Chip key={c} $c={c} />)}</Chips>
                  <Ramps>{ramps.map((r) => <Ramp key={r[0] + r[4]} $c={r} />)}</Ramps>
                  <h3>标准色</h3>
                  <Chips>{standardColors.map((c) => <Chip key={c} $c={c} />)}</Chips>
                  <PaletteAction>
                    <svg width="9" height="9" viewBox="0 0 9 9" aria-hidden>
                      <circle cx="4.500" cy="4.500" r="4.500" fill="#cfa38c" />
                      <path d="M4.500 4.500V0A4.500 4.500 0 0 1 9 4.500z" fill="#e07b39" />
                      <path d="M4.500 4.500H9A4.500 4.500 0 0 1 4.500 9z" fill="#a8583c" />
                      <path d="M4.500 4.500V9A4.500 4.500 0 0 1 0 4.500z" fill="#5b8fc0" />
                      <circle cx="4.500" cy="4.500" r="1.500" fill="#fff" />
                    </svg>
                    <span>其他颜色(<u>M</u>)...</span>
                  </PaletteAction>
                  <PaletteAction>
                    <Svg width="9" height="9" viewBox="0 0 12 12" aria-hidden>{dropper.body}</Svg>
                    <span>取色器(<u>E</u>)</span>
                  </PaletteAction>
                </Palette>
                <Pickers>
                  {pickers.map(([name, key, color]) => (
                    <Picker key={name}>
                      <span>{name}(<u>{key}</u>)</span>
                      <PickerButton><Well $c={color} /><Caret /></PickerButton>
                    </Picker>
                  ))}
                </Pickers>
              </Legend>
              <Columns>
                {themeColors.map((c, i) => (
                  <Column key={c}>
                    <Block $c={c} />
                    <figcaption>{columnNames[i]}</figcaption>
                  </Column>
                ))}
              </Columns>
              <Wires width="726" height="371" viewBox="0 0 726 371" aria-hidden>
                {wires.map(([d, c]) => <path key={d} d={d} stroke={c} />)}
              </Wires>
            </Diagram>
          </Slide>
        </Stage>

        <Scroll>
          <button aria-label="向上滚动"><UpCaret /></button>
          <ScrollThumb />
          <ScrollTrack />
          <button aria-label="向下滚动"><Caret /></button>
          <PageJump>
            <button aria-label="上一张">
              <Svg width="6" height="8" viewBox="0 0 6 8"><path d="M3 0l3 3H0zM3 3l3 3H0zM2 6h2v1H2z" fill="currentColor" stroke="none" /></Svg>
            </button>
            <button aria-label="下一张">
              <Svg width="6" height="8" viewBox="0 0 6 8"><path d="M3 8L0 5h6zM3 5L0 2h6zM2 1h2v1H2z" fill="currentColor" stroke="none" /></Svg>
            </button>
          </PageJump>
        </Scroll>
      </Work>

      <Status>
        <StatusText>
          <span>幻灯片 第 1 张, 共 2 张</span>
          <Icon name="spell" tone={SOFT} />
          <span>中文(中国)</span>
        </StatusText>
        <NotesButton><Icon name="notes" tone={SOFT} />备注</NotesButton>
        <View $active aria-label="普通"><Icon name="normal" /></View>
        <View aria-label="幻灯片浏览"><Icon name="sorter" /></View>
        <View aria-label="阅读视图"><Icon name="reading" /></View>
        <View aria-label="放映"><Icon name="show" /></View>
        <Zoom>
          <b>−</b>
          <input type="range" min={10} max={180} defaultValue={88} aria-label="缩放" />
          <b>+</b>
          <output>88%</output>
          <Icon name="fit" tone={SOFT} />
        </Zoom>
      </Status>

      <Pointer width="11" height="16" viewBox="0 0 11 16" aria-hidden>
        <path d="M1 1v11.500l2.700-2.500L6 15l2-1-2.200-4.500H10z" fill="#fff" stroke="#555" />
      </Pointer>
    </Window>
  );
}
